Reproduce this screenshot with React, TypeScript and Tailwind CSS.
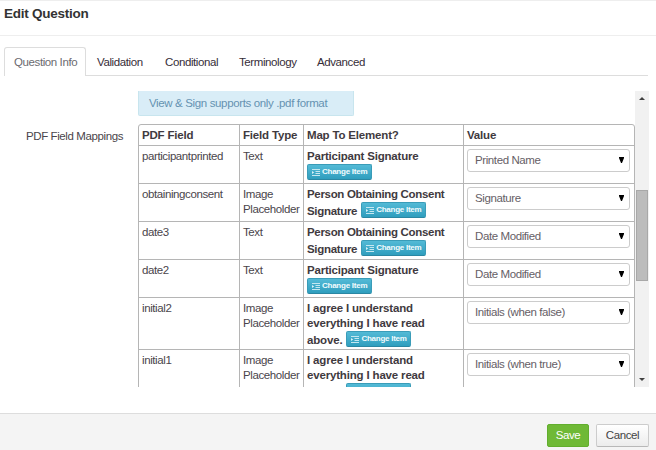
import React from "react";

type Row = {
  field: string;
  type: string[];
  lines: string[];
  last: string;
  value: string;
  height: string;
  tracking: string;
};

const rows: Row[] = [
  { field: "participantprinted", type: ["Text"], lines: ["Participant Signature"], last: "", value: "Printed Name", height: "h-[38px]", tracking: "tracking-[-0.2px]" },
  { field: "obtainingconsent", type: ["Image", "Placeholder"], lines: ["Person Obtaining Consent"], last: "Signature", value: "Signature", height: "h-[38px]", tracking: "tracking-[-0.32px]" },
  { field: "date3", type: ["Text"], lines: ["Person Obtaining Consent"], last: "Signature", value: "Date Modified", height: "h-[38px]", tracking: "tracking-[-0.32px]" },
  { field: "date2", type: ["Text"], lines: ["Participant Signature"], last: "", value: "Date Modified", height: "h-[38px]", tracking: "tracking-[-0.2px]" },
  { field: "initial2", type: ["Image", "Placeholder"], lines: ["I agree I understand", "everything I have read"], last: "above.", value: "Initials (when false)", height: "h-[52px]", tracking: "tracking-[-0.17px]" },
  { field: "initial1", type: ["Image", "Placeholder"], lines: ["I agree I understand", "everything I have read"], last: "above.", value: "Initials (when true)", height: "h-[53px]", tracking: "tracking-[-0.17px]" },
];

const tabs = [
  { label: "Validation", cls: "ml-[11px] w-[47px]" },
  { label: "Conditional", cls: "ml-[21px] w-[53px]" },
  { label: "Terminology", cls: "ml-[21px] w-[58px]" },
  { label: "Advanced", cls: "ml-[20px] w-[47px]" },
];

function ChangeItem() {
  return (
    <button className="flex h-[16px] w-[65px] shrink-0 items-center rounded-[2px] border border-[#3a9cb8] border-b-[#2b87a3] bg-linear-to-b from-[#53bad6] to-[#2f9ebe] pl-[4px] text-[8px] font-bold leading-[14px] tracking-[-0.25px] text-[#f2fbfd]">
      <svg width="8" height="7" viewBox="0 0 8 7" className="mr-[2px] shrink-0" fill="none" stroke="#c4e7f0" strokeWidth="1">
        <path d="M0 0.5H8M3.5 2.5H8M3.5 4.5H8M0 6.5H8" />
        <path d="M0 2L2.2 3.5L0 5Z" fill="#d9f1f7" stroke="none" />
      </svg>
      <span className="whitespace-nowrap">Change Item</span>
    </button>
  );
}

function Select({ value }: { value: string }) {
  return (
    <div className="flex h-[23px] w-[163px] items-center justify-between rounded-[3px] border border-[#cccccc] bg-white pl-[7px] pr-[5px] text-[#666066]">
      <span className="whitespace-nowrap">{value}</span>
      <svg width="5" height="6" viewBox="0 0 5 6" className="mb-[2px]">
        <path d="M0 0H5V1L3 6H2L0 1Z" fill="#000" />
      </svg>
    </div>
  );
}

export default function App() {
  return (
    <div className="flex h-[450px] w-[656px] flex-col overflow-hidden bg-white font-['Liberation_Sans',Arial,sans-serif] text-[11.5px] tracking-[-0.4px] text-[#4a454b]">
      <header className="h-[36px] shrink-0 border-y border-[#eeeeee] pl-[4px] text-[13.5px] font-bold leading-[25px] tracking-[-0.25px] text-[#333333]">
        Edit Question
      </header>
      <nav className="ml-[4px] mr-[8px] mt-[11px] flex h-[29px] shrink-0 border-b border-[#dddddd] leading-[28px] text-[#362d38]">
        <div className="h-[29px] w-[82px] rounded-t-[3px] border border-b-0 border-[#dddddd] bg-white pl-[9px] text-[#6b6b70]">
          <span className="whitespace-nowrap">Question Info</span>
        </div>
        {tabs.map((t) => (
          <div key={t.label} className={`${t.cls} whitespace-nowrap pt-px`}>
            {t.label}
          </div>
        ))}
      </nav>

      <main className="mt-[15px] flex h-[296px] shrink-0 overflow-hidden">
        <div className="w-[138px] shrink-0 pl-[26px] pt-[38px] leading-[15px]">
          <span className="whitespace-nowrap">PDF Field Mappings</span>
        </div>
        <div className="w-[497px] shrink-0">
          <div className="h-[25px] w-[216px] rounded-b-[2px] border border-t-0 border-[#c8e5ee] bg-[#d9edf7] pl-[10px] leading-[24px] tracking-[-0.36px] text-[#6592b1]">
            <span className="whitespace-nowrap">View &amp; Sign supports only .pdf format</span>
          </div>
          <div className="mt-[8px] rounded-t-[3px] border border-[#b5b5b5]">
            <div className="grid h-[21px] grid-cols-[101px_64px_160px_170px] border-b border-[#b5b5b5] font-bold leading-[20px] tracking-[-0.18px] text-[#3f3a40] [&>div]:whitespace-nowrap [&>div]:border-r [&>div]:border-[#b5b5b5] [&>div]:pl-[3px] [&>div:last-child]:border-r-0">
              <div>PDF Field</div>
              <div>Field Type</div>
              <div>Map To Element?</div>
              <div>Value</div>
            </div>
            {rows.map((r) => (
              <div
                key={r.field}
                className={`${r.height} grid grid-cols-[101px_64px_160px_170px] overflow-hidden border-b border-[#b5b5b5] leading-[15px] [&>div]:border-r [&>div]:border-[#b5b5b5] [&>div]:pl-[3px] [&>div]:pt-[3px] [&>div:last-child]:border-r-0`}
              >
                <div>{r.field}</div>
                <div>
                  {r.type.map((t) => (
                    <div key={t}>{t}</div>
                  ))}
                </div>
                <div className={`${r.tracking} font-bold text-[#3f3a40]`}>
                  {r.lines.map((l) => (
                    <div key={l} className="whitespace-nowrap">{l}</div>
                  ))}
                  <div className="flex h-[17px] items-start">
                    {r.last && <span className="mr-[4px] pt-[2px]">{r.last}</span>}
                    <ChangeItem />
                  </div>
                </div>
                <div>
                  <Select value={r.value} />
                </div>
              </div>
            ))}
          </div>
        </div>
        <div className="flex w-[14px] shrink-0 flex-col items-center bg-[#f1f1f1]">
          <svg width="6" height="3" viewBox="0 0 6 3" className="mt-[6px] shrink-0">
            <path d="M0 3L3 0L6 3Z" fill="#404040" />
          </svg>
          <div className="mt-[90px] h-[91px] w-[12px] shrink-0 border border-[#a8a8a8] bg-[#bcbcbc]" />
          <svg width="6" height="3" viewBox="0 0 6 3" className="mb-[6px] mt-auto shrink-0">
            <path d="M0 0H6L3 3Z" fill="#404040" />
          </svg>
        </div>
      </main>

      <footer className="mt-auto flex h-[37px] shrink-0 justify-end border-t border-[#dddddd] bg-[#f4f4f4] pr-[7px] pt-[10px]">
        <button className="mr-[7px] h-[23px] w-[42px] rounded-[2px] border border-[#62ae2e] bg-[#6fb936] leading-[21px] text-white">Save</button>
        <button className="h-[23px] w-[53px] rounded-[2px] border border-[#cccccc] border-b-[#b8b8b8] bg-linear-to-b from-white to-[#ececec] leading-[21px] text-[#444444]">Cancel</button>
      </footer>
    </div>
  );
}
